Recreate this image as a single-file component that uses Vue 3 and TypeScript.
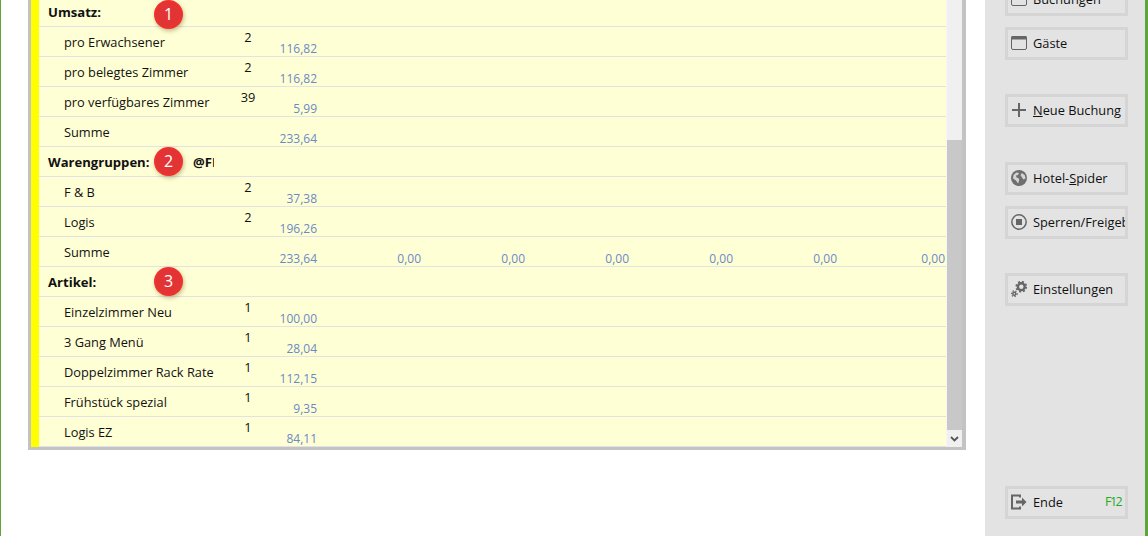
<script setup lang="ts">
interface Row {
  label: string
  qty?: string
  amount?: string
  head?: boolean
  badge?: number
  extra?: string
  zeros?: boolean
}

const rows: Row[] = [
  { label: 'Umsatz:', head: true, badge: 1 },
  { label: 'pro Erwachsener', qty: '2', amount: '116,82' },
  { label: 'pro belegtes Zimmer', qty: '2', amount: '116,82' },
  { label: 'pro verfügbares Zimmer', qty: '39', amount: '5,99' },
  { label: 'Summe', amount: '233,64' },
  { label: 'Warengruppen:', head: true, badge: 2, extra: '@FI' },
  { label: 'F & B', qty: '2', amount: '37,38' },
  { label: 'Logis', qty: '2', amount: '196,26' },
  { label: 'Summe', amount: '233,64', zeros: true },
  { label: 'Artikel:', head: true, badge: 3 },
  { label: 'Einzelzimmer Neu', qty: '1', amount: '100,00' },
  { label: '3 Gang Menü', qty: '1', amount: '28,04' },
  { label: 'Doppelzimmer Rack Rate', qty: '1', amount: '112,15' },
  { label: 'Frühstück spezial', qty: '1', amount: '9,35' },
  { label: 'Logis EZ', qty: '1', amount: '84,11' },
]

const zeros = [1, 2, 3, 4, 5, 6]
</script>

<template>
  <div class="page">
    <main class="content">
      <section class="panel">
        <div class="stripe"></div>
        <div class="rows">
          <div v-for="(r, i) in rows" :key="i" class="row" :class="{ head: r.head }">
            <template v-if="r.head">
              <span class="head-label">{{ r.label }}</span>
              <span v-if="r.badge" class="badge">{{ r.badge }}</span>
              <span v-if="r.extra" class="extra">{{ r.extra }}</span>
            </template>
            <template v-else>
              <span class="label">{{ r.label }}</span>
              <span class="qty">{{ r.qty }}</span>
              <span class="amount">{{ r.amount }}</span>
              <template v-if="r.zeros">
                <span v-for="z in zeros" :key="z" class="amount zero" :class="{ last: z === 6 }">0,00</span>
              </template>
            </template>
          </div>
        </div>
        <div class="scrollbar">
          <div class="track"><div class="thumb"></div></div>
          <div class="arrow">
            <svg width="9" height="6" viewBox="0 0 9 6"><path d="M1 1l3.5 3.5L8 1" fill="none" stroke="#555" stroke-width="1.8" /></svg>
          </div>
        </div>
      </section>
    </main>

    <aside class="side">
      <button class="btn first">
        <svg class="ico" width="16" height="16" viewBox="0 0 16 16"><rect x=".5" y="1.500" width="15" height="13" rx="1.500" fill="none" stroke="#666" /><rect x=".5" y="1" width="15" height="3.500" fill="#666" /></svg>
        <span>Buchungen</span>
      </button>
      <button class="btn gap-s">
        <svg class="ico" width="16" height="16" viewBox="0 0 16 16"><rect x=".5" y="1.500" width="15" height="13" rx="1.500" fill="none" stroke="#666" /><rect x=".5" y="1" width="15" height="3.500" fill="#666" /></svg>
        <span>Gäste</span>
      </button>
      <button class="btn gap-l">
        <svg class="ico" width="16" height="16" viewBox="0 0 16 16"><path d="M8 1v14M1 8h14" stroke="#666" stroke-width="2" fill="none" /></svg>
        <span><u>N</u>eue Buchung</span>
      </button>
      <button class="btn gap-l2">
        <svg class="ico" width="16" height="16" viewBox="0 0 16 16">
          <circle cx="8" cy="8" r="8" fill="#6f6f6f" />
          <path d="M2.500 5l3-2.500 2.500.5-1 2-2 .5.5 2 2.500 1v2.500L7 13.500 5 10.500 2 8.500zM11 3l3 2.500.5 3-2 1-1.500-2-1.500-2.500z" fill="#d4d4d4" />
        </svg>
        <span>Hotel-<u>S</u>pider</span>
      </button>
      <button class="btn gap-m">
        <svg class="ico" width="16" height="16" viewBox="0 0 16 16"><circle cx="8" cy="8" r="7.200" fill="none" stroke="#666" stroke-width="1.500" /><rect x="5" y="5" width="6" height="6" fill="#666" /></svg>
        <span class="clip">Sperren/Freigeben</span>
      </button>
      <button class="btn gap-l3">
        <svg class="ico" width="16" height="16" viewBox="0 0 16 16">
          <circle cx="10.300" cy="5.700" r="3.400" fill="none" stroke="#666" stroke-width="2.400" />
          <circle cx="10.300" cy="5.700" r="5" fill="none" stroke="#666" stroke-width="1.800" stroke-dasharray="2 1.930" />
          <circle cx="3.300" cy="12.700" r="1.500" fill="none" stroke="#666" stroke-width="1.400" />
          <circle cx="3.300" cy="12.700" r="2.800" fill="none" stroke="#666" stroke-width="1.200" stroke-dasharray="1.400 1.350" />
        </svg>
        <span>Einstellungen</span>
      </button>
      <button class="btn end">
        <svg class="ico" width="16" height="16" viewBox="0 0 16 16"><path d="M9 3.500V1.500H1v13h8v-2" fill="none" stroke="#666" stroke-width="2" /><path d="M5 6.500h6V3.500L15.500 8 11 12.500v-3H5z" fill="#666" /></svg>
        <span>Ende</span>
        <span class="key">F12</span>
      </button>
    </aside>
  </div>
</template>

<style>
html,
body {
  margin: 0;
  background: #fff;
}
</style>

<style scoped>
.page {
  width: 1148px;
  height: 536px;
  display: flex;
  overflow: hidden;
  box-sizing: border-box;
  border-left: 1px solid #5fa53a;
  border-right: 3px solid #5fa53a;
  font-family: "Open Sans", "Liberation Sans", sans-serif;
  font-size: 12.8px;
  color: #111;
}

.content {
  width: 984px;
  padding-left: 27px;
  box-sizing: border-box;
}

.panel {
  width: 938px;
  height: 450px;
  box-sizing: border-box;
  display: flex;
  background: #f6f6f6;
  border: 3px solid #c3c3c3;
  border-top: 0;
  border-right-width: 4px;
}

.stripe {
  width: 8px;
  background: #ffff00;
}

.rows {
  width: 907px;
  background: #ffffd5;
  overflow: hidden;
}

.row {
  height: 30px;
  box-sizing: border-box;
  border-bottom: 1px solid #e2e2e2;
  display: flex;
  position: relative;
  line-height: 18px;
}

.row:first-child {
  margin-top: -3px;
}

.row.head {
  align-items: center;
  padding-top: 1px;
  font-weight: 700;
  font-size: 13.1px;
}

.head-label {
  margin-left: 9px;
}

.badge {
  position: absolute;
  left: 115px;
  top: 0;
  width: 29px;
  height: 29px;
  box-sizing: border-box;
  border: 2px solid #f2302c;
  border-radius: 50%;
  background: #e23434;
  color: #fff;
  font-size: 16px;
  font-weight: 400;
  line-height: 24px;
  text-align: center;
  box-shadow: 1px 2px 4px rgba(80, 60, 0, 0.35);
}

.row:first-child .badge {
  top: 3px;
}

.extra {
  position: absolute;
  left: 154px;
  top: 6px;
  width: 21px;
  overflow: hidden;
}

.label {
  width: 185px;
  padding: 6px 0 0 25px;
  box-sizing: border-box;
}

.qty {
  width: 48px;
  padding-top: 1px;
  text-align: center;
}

.amount {
  width: 45px;
  padding-top: 13px;
  text-align: right;
  font-size: 12px;
  color: #6a8ac6;
}

.zero {
  width: 104px;
}

.zero.last {
  width: 108px;
}

.scrollbar {
  width: 15px;
  margin-left: 1px;
  display: flex;
  flex-direction: column;
  background: #f0f0f0;
}

.track {
  flex: 1;
  padding-top: 140px;
}

.thumb {
  height: 290px;
  background: #c8c8c8;
}

.arrow {
  height: 17px;
  display: flex;
  align-items: center;
  justify-content: center;
}

.side {
  width: 160px;
  height: 536px;
  box-sizing: border-box;
  background: #e3e3e3;
  padding: 0 17px 0 20px;
  display: flex;
  flex-direction: column;
}

.btn {
  width: 123px;
  height: 33px;
  flex: none;
  box-sizing: border-box;
  border: 3px solid #d5d5d5;
  background: #e3e3e3;
  padding: 0 0 2px 3px;
  display: flex;
  align-items: center;
  gap: 6px;
  font: inherit;
  color: #111;
  overflow: hidden;
  white-space: nowrap;
  text-align: left;
}

.ico {
  flex: none;
}

.first {
  margin-top: -17px;
}

.gap-s {
  margin-top: 11px;
}

.gap-l {
  margin-top: 34px;
}

.gap-l2 {
  margin-top: 35px;
}

.gap-m {
  margin-top: 11px;
}

.gap-l3 {
  margin-top: 34px;
}

.end {
  margin-top: auto;
  margin-bottom: 17px;
}

.clip {
  overflow: hidden;
}

.key {
  margin-left: auto;
  padding-right: 4px;
  color: #22aa22;
  font-size: 12.5px;
  letter-spacing: -1.6px;
}
</style>
